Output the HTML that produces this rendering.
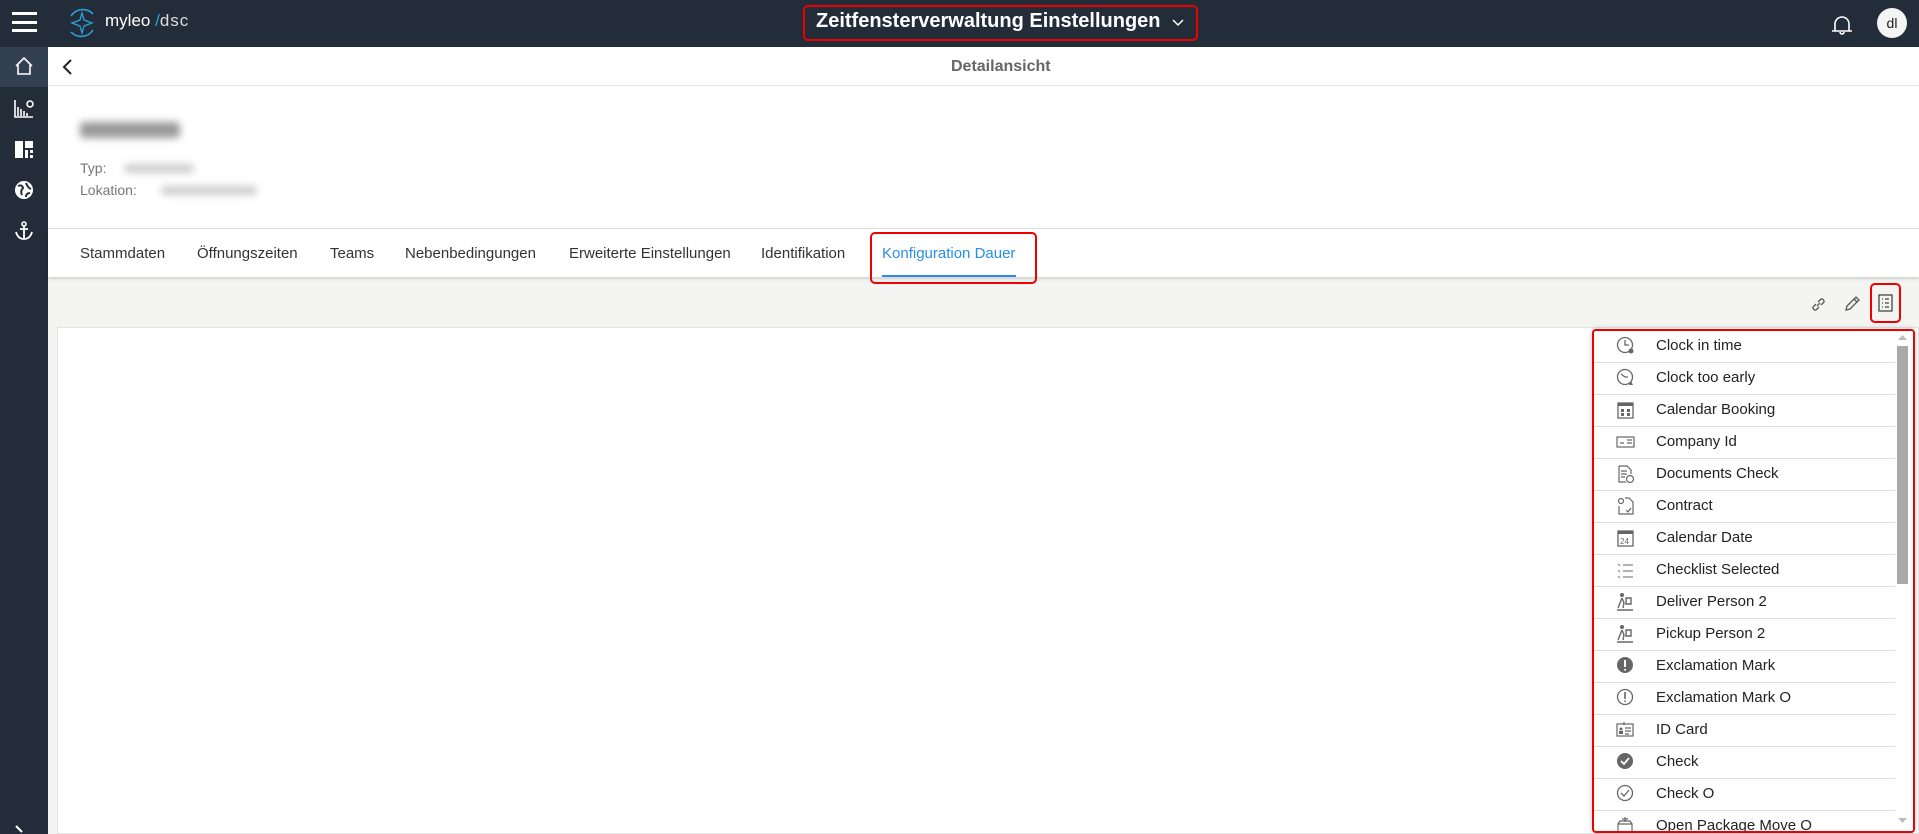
<!DOCTYPE html>
<html><head><meta charset="utf-8"><style>
*{box-sizing:border-box;margin:0;padding:0}
body{width:1919px;height:834px;overflow:hidden;background:#f4f4f3;font-family:"Liberation Sans",sans-serif;position:relative}
.top{position:absolute;left:0;top:0;width:1919px;height:47px;background:#232d3a}
.side{position:absolute;left:0;top:47px;width:48px;height:787px;background:#232d3a}
.abs{position:absolute}
.hdr{position:absolute;left:48px;top:47px;width:1871px;height:39px;background:#fff;border-bottom:1px solid #e2e2e2}
.info{position:absolute;left:48px;top:86px;width:1871px;height:143px;background:#fff;border-bottom:1px solid #ddd}
.tabs{position:absolute;left:48px;top:229px;width:1871px;height:48px;background:#fff;box-shadow:0 2px 3px rgba(0,0,0,.15)}
.tab{position:absolute;top:16px;font-size:15px;color:#333}
.content{position:absolute;left:57px;top:327px;width:1862px;height:507px;background:#fff;border:1px solid #e4e4e4}
.dd{position:absolute;left:1592px;top:329px;width:323px;height:504px;background:#fff;border:2px solid #e00;border-radius:4px;box-shadow:0 0 6px rgba(0,0,0,.2);overflow:hidden}
.row{position:absolute;left:0;width:301px;height:32px;border-bottom:1px solid #ddd;font-size:15px;color:#222}
.row span{position:absolute;left:62px;top:6px}
.row svg{position:absolute;left:22px;top:5px}
.blur{position:absolute;background:#aaa;filter:blur(4px);border-radius:4px}
</style></head><body>
<div class="top"></div>
<div class="side"></div>
<div class="abs" style="left:0;top:47px;width:48px;height:40px;background:#334052"></div>
<div class="abs" style="left:12px;top:12px;width:25px;height:3px;background:#fff"></div>
<div class="abs" style="left:12px;top:21px;width:25px;height:3px;background:#fff"></div>
<div class="abs" style="left:12px;top:29px;width:25px;height:3px;background:#fff"></div>
<svg class="abs" style="left:65px;top:6px" width="34" height="34" viewBox="0 0 34 34"><path d="M6 10A14 14 0 0 1 28 8M28 24A14 14 0 0 1 6 26" stroke="#2aa3dc" stroke-width="1.6" fill="none"/><path d="M17 7L19 14L27 17L19 20L17 27L15 20L7 17L15 14Z" stroke="#2aa3dc" stroke-width="1.3" fill="none"/></svg>
<div class="abs" style="left:105px;top:11px;font-size:17px;color:#fff">myleo<span style="color:#2aa3dc"> /</span><span style="color:#ddd;letter-spacing:1px">dsc</span></div>
<div class="abs" style="left:803px;top:5px;width:395px;height:36px;border:2px solid #e00;border-radius:5px"></div>
<div class="abs" style="left:816px;top:10px;font-size:20px;color:#fff;font-weight:bold;white-space:nowrap">Zeitfensterverwaltung Einstellungen</div>
<svg class="abs" style="left:1172px;top:19px" width="12" height="8"><path d="M1 1L6 6L11 1" stroke="#fff" stroke-width="1.5" fill="none"/></svg>
<svg class="abs" style="left:1830px;top:12px" width="24" height="24" viewBox="0 0 24 24"><path d="M5 19V12A7 7 0 0 1 19 12V19M2 19H22M10 20a2 2 0 0 0 4 0" stroke="#fff" stroke-width="1.6" fill="none"/></svg>
<div class="abs" style="left:1877px;top:8px;width:30px;height:30px;border-radius:50%;background:#f4f4f4;font-size:14px;text-align:center;line-height:30px;color:#222">dl</div>
<svg class="abs" style="left:14px;top:56px" width="20" height="20"><path d="M2 10L10 2L18 10M4 8V18H16V8" stroke="#fff" stroke-width="1.6" fill="none"/></svg>
<svg class="abs" style="left:14px;top:99px" width="20" height="20"><path d="M1 1V18H19M4 17V8M7 17V10M10 17V12M13 17V14" stroke="#fff" stroke-width="1.6" fill="none"/><circle cx="16" cy="5" r="3" stroke="#fff" stroke-width="1.6" fill="none"/></svg>
<svg class="abs" style="left:15px;top:141px" width="18" height="18"><rect x="0" y="0" width="8" height="17" fill="#fff"/><rect x="10" y="0" width="8" height="7" fill="#fff"/><rect x="10" y="9" width="3" height="8" fill="#fff"/><rect x="15" y="9" width="3" height="3" fill="#fff"/><rect x="15" y="14" width="3" height="3" fill="#fff"/></svg>
<svg class="abs" style="left:14px;top:180px" width="20" height="20"><circle cx="10" cy="10" r="9" fill="#fff"/><path d="M4 6Q8 4 9 8Q6 11 8 15M12 3Q14 8 17 9M12 17Q12 13 16 13" stroke="#232d3a" stroke-width="2" fill="none"/></svg>
<svg class="abs" style="left:14px;top:221px" width="20" height="20"><circle cx="10" cy="3" r="2" stroke="#fff" stroke-width="1.6" fill="none"/><path d="M10 5V18M6 8H14M2 11Q4 18 10 18Q16 18 18 11" stroke="#fff" stroke-width="1.8" fill="none"/></svg>
<svg class="abs" style="left:14px;top:825px" width="12" height="9"><path d="M2 1L8 7" stroke="#fff" stroke-width="2"/></svg>
<div class="hdr"></div>
<svg class="abs" style="left:62px;top:59px" width="12" height="16"><path d="M9 1L2 8L9 15" stroke="#222" stroke-width="2" fill="none"/></svg>
<div class="abs" style="left:951px;top:58px;font-size:16px;font-weight:bold;color:#666">Detailansicht</div>
<div class="info"></div>
<div class="blur" style="left:80px;top:122px;width:100px;height:16px;background:#999"></div>
<div class="abs" style="left:80px;top:160px;font-size:14px;color:#777">Typ:</div>
<div class="abs" style="left:80px;top:182px;font-size:14px;color:#777">Lokation:</div>
<div class="blur" style="left:124px;top:164px;width:70px;height:9px;background:#ccc"></div>
<div class="blur" style="left:161px;top:186px;width:96px;height:9px;background:#ccc"></div>
<div class="tabs">
<div class="tab" style="left:32px">Stammdaten</div>
<div class="tab" style="left:149px">Öffnungszeiten</div>
<div class="tab" style="left:282px">Teams</div>
<div class="tab" style="left:357px">Nebenbedingungen</div>
<div class="tab" style="left:521px">Erweiterte Einstellungen</div>
<div class="tab" style="left:713px">Identifikation</div>
<div class="tab" style="left:834px;color:#2a8ee6">Konfiguration Dauer</div>
<div class="abs" style="left:834px;top:46px;width:134px;height:2px;background:#2a8ee6"></div>
</div>
<div class="abs" style="left:870px;top:232px;width:167px;height:52px;border:2px solid #e00;border-radius:5px"></div>
<svg class="abs" style="left:1810px;top:296px" width="17" height="17" viewBox="0 0 17 17"><path d="M7 10L10 7M6 8L3 11A2.5 2.5 0 0 0 6 14L9 11M8 6L11 3A2.5 2.5 0 0 1 14 6L11 9" stroke="#555" stroke-width="1.3" fill="none"/></svg>
<svg class="abs" style="left:1843px;top:295px" width="18" height="18" viewBox="0 0 18 18"><path d="M3 15L4 11L13 2L16 5L7 14Z M11 4L14 7" stroke="#555" stroke-width="1.3" fill="none"/></svg>
<div class="abs" style="left:1870px;top:283px;width:31px;height:40px;border:2px solid #e00;border-radius:5px"></div>
<svg class="abs" style="left:1878px;top:294px" width="15" height="18"><rect x="1" y="1" width="13" height="16" stroke="#444" stroke-width="1.3" fill="none"/><path d="M4 5H5M7 5H11M4 9H5M7 9H11M4 13H5M7 13H11" stroke="#444" stroke-width="1.3"/></svg>
<div class="content"></div>
<div class="dd">
<div class="row" style="top:0"><svg width="20" height="20"><circle cx="9" cy="9" r="7.5" stroke="#666" stroke-width="1.3" fill="none"/><path d="M9 4V9H13" stroke="#666" stroke-width="1.3" fill="none"/><circle cx="15" cy="15" r="2.5" fill="#666"/></svg><span>Clock in time</span></div>
<div class="row" style="top:32px"><svg width="20" height="20"><circle cx="9" cy="9" r="7.5" stroke="#666" stroke-width="1.3" fill="none"/><path d="M5 6L9 9H12" stroke="#666" stroke-width="1.3" fill="none"/><path d="M15 13L17 17H13Z" fill="#666"/></svg><span>Clock too early</span></div>
<div class="row" style="top:64px"><svg width="20" height="20"><rect x="2" y="3" width="15" height="15" stroke="#666" stroke-width="1.3" fill="none"/><rect x="2" y="3" width="15" height="3" fill="#666"/><rect x="5" y="9" width="3" height="3" fill="#666"/><rect x="11" y="9" width="3" height="3" fill="#666"/><rect x="5" y="13" width="3" height="3" fill="#666"/><rect x="11" y="13" width="3" height="3" fill="#666"/></svg><span>Calendar Booking</span></div>
<div class="row" style="top:96px"><svg width="20" height="20"><rect x="1" y="5" width="17" height="10" stroke="#666" stroke-width="1.2" fill="none"/><path d="M4 11H8M11 8H16M11 11H16" stroke="#666" stroke-width="1.2"/></svg><span>Company Id</span></div>
<div class="row" style="top:128px"><svg width="20" height="20"><path d="M3 2H11L15 6V10M3 2V18H10" stroke="#666" stroke-width="1.2" fill="none"/><path d="M5 7H11M5 10H11M5 13H9" stroke="#666" stroke-width="1.2"/><circle cx="14" cy="15" r="3.5" stroke="#666" stroke-width="1.2" fill="none"/></svg><span>Documents Check</span></div>
<div class="row" style="top:160px"><svg width="20" height="20"><path d="M9 2H13L17 6V18H3V10" stroke="#666" stroke-width="1.2" fill="none"/><circle cx="5" cy="5" r="2.5" stroke="#666" stroke-width="1.2" fill="none"/><path d="M10 14L12 16L15 12" stroke="#666" stroke-width="1.2" fill="none"/></svg><span>Contract</span></div>
<div class="row" style="top:192px"><svg width="20" height="20"><rect x="2" y="3" width="15" height="15" stroke="#666" stroke-width="1.3" fill="none"/><rect x="2" y="3" width="15" height="3" fill="#666"/><text x="4" y="16" font-size="8" font-family="Liberation Sans" fill="#666">24</text></svg><span>Calendar Date</span></div>
<div class="row" style="top:224px"><svg width="20" height="20"><path d="M2 4L4 6M2 10L4 12M2 16L4 18M7 5H17M7 11H17M7 17H17" stroke="#888" stroke-width="1.2"/></svg><span>Checklist Selected</span></div>
<div class="row" style="top:256px"><svg width="20" height="20"><circle cx="6" cy="3" r="2" fill="#666"/><path d="M6 6L4 11L2 16M6 6L8 11L7 16M1 18H17M10 6H15V12H10Z" stroke="#666" stroke-width="1.4" fill="none"/></svg><span>Deliver Person 2</span></div>
<div class="row" style="top:288px"><svg width="20" height="20"><circle cx="6" cy="3" r="2" fill="#666"/><path d="M6 6L4 11L2 16M6 6L8 11L7 16M1 18H17M10 6H15V12H10Z" stroke="#666" stroke-width="1.4" fill="none"/></svg><span>Pickup Person 2</span></div>
<div class="row" style="top:320px"><svg width="20" height="20"><circle cx="9" cy="9" r="8" fill="#666"/><path d="M9 4V11M9 13V14.5" stroke="#fff" stroke-width="2"/></svg><span>Exclamation Mark</span></div>
<div class="row" style="top:352px"><svg width="20" height="20"><circle cx="9" cy="9" r="7.5" stroke="#666" stroke-width="1.3" fill="none"/><path d="M9 4V11M9 12.5V14" stroke="#666" stroke-width="1.6"/></svg><span>Exclamation Mark O</span></div>
<div class="row" style="top:384px"><svg width="20" height="20"><rect x="1" y="4" width="16" height="12" stroke="#666" stroke-width="1.2" fill="none"/><circle cx="5" cy="9" r="1.5" fill="#666"/><rect x="3" y="11" width="4" height="3" fill="#666"/><path d="M9 8H15M9 11H15M9 14H13M8 2V5" stroke="#666" stroke-width="1.2"/></svg><span>ID Card</span></div>
<div class="row" style="top:416px"><svg width="20" height="20"><circle cx="9" cy="9" r="8" fill="#666"/><path d="M5 9L8 12L13 6" stroke="#fff" stroke-width="1.8" fill="none"/></svg><span>Check</span></div>
<div class="row" style="top:448px"><svg width="20" height="20"><circle cx="9" cy="9" r="7.5" stroke="#666" stroke-width="1.3" fill="none"/><path d="M5 9L8 12L13 6" stroke="#666" stroke-width="1.3" fill="none"/></svg><span>Check O</span></div>
<div class="row" style="top:480px"><svg width="20" height="20"><path d="M2 8H16V17H2ZM2 8L4 5H14L16 8M9 1V6M6 3H12" stroke="#666" stroke-width="1.2" fill="none"/></svg><span>Open Package Move O</span></div>
<div class="abs" style="left:301px;top:0;width:18px;height:504px;background:#fff"></div>
<div class="abs" style="left:303px;top:15px;width:11px;height:238px;background:#aaa"></div>
<svg class="abs" style="left:304px;top:4px" width="9" height="6"><path d="M0 5L4.5 0L9 5Z" fill="#bbb"/></svg>
<svg class="abs" style="left:304px;top:487px" width="9" height="6"><path d="M0 0L4.5 5L9 0Z" fill="#bbb"/></svg>
</div>
</body></html>
